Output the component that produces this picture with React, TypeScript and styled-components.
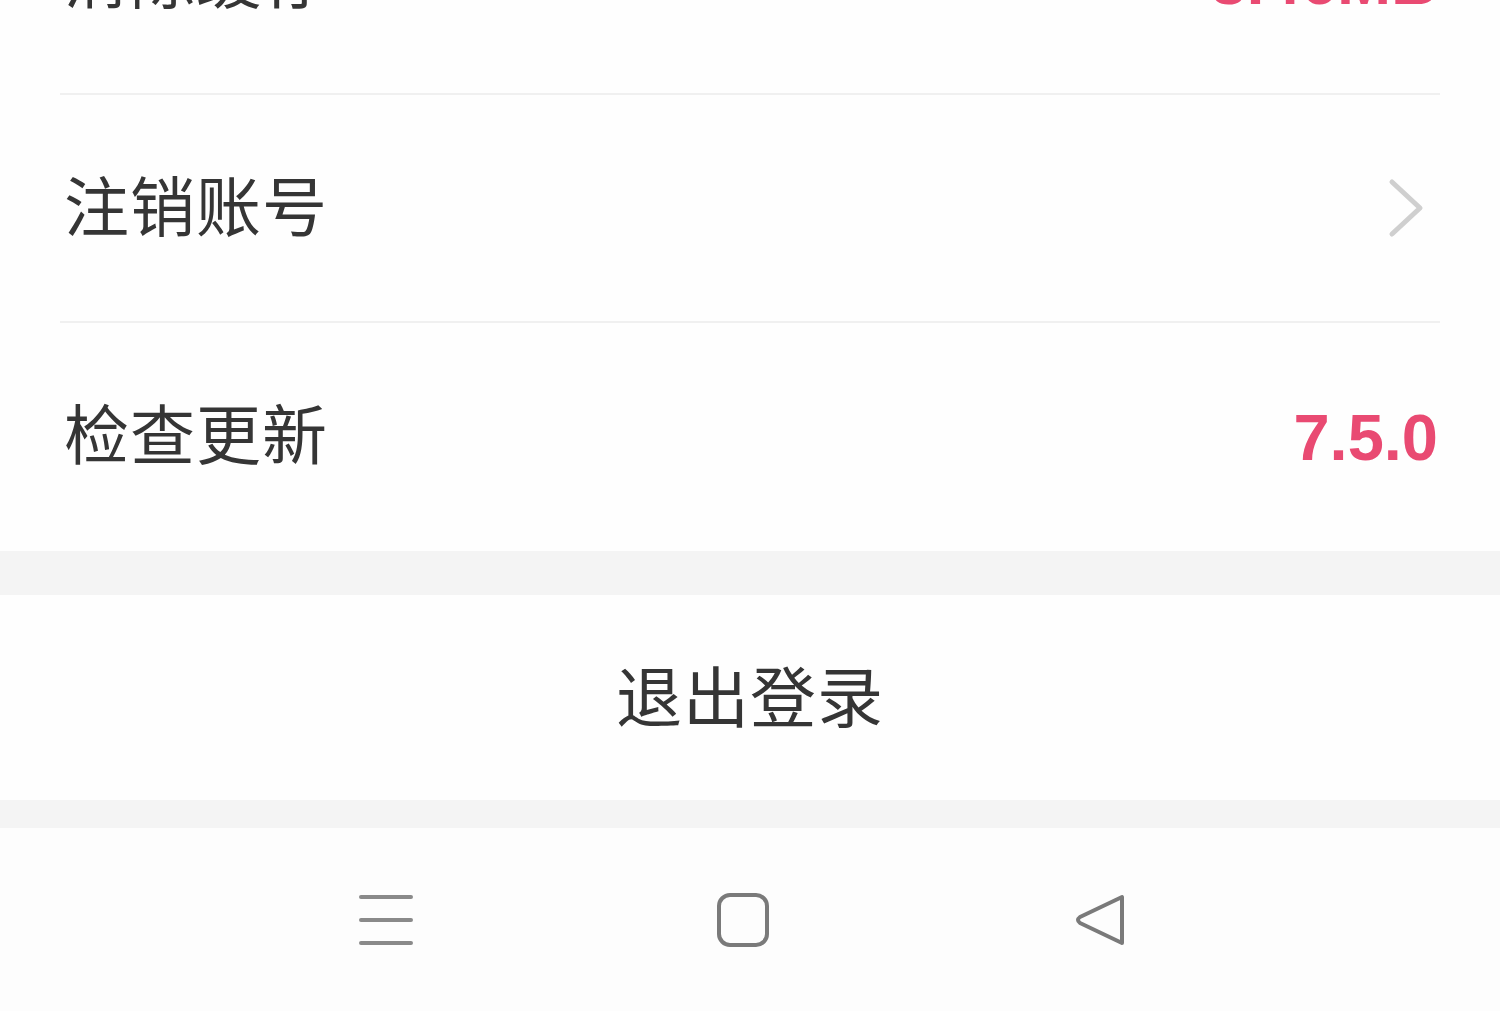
import React from 'react';
import styled, { createGlobalStyle } from 'styled-components';

const GlobalStyle = createGlobalStyle`
  html, body {
    margin: 0;
    padding: 0;
    background: #fdfdfd;
  }
  body {
    font-family: "Noto Sans CJK SC", "Noto Sans", sans-serif;
  }
`;

const Screen = styled.div`
  width: 1500px;
  height: 1011px;
  overflow: hidden;
  display: flex;
  flex-direction: column;
  background: #fdfdfd;
`;

const Group = styled.div`
  margin-top: -133px;
  background: #fefefe;
  display: flex;
  flex-direction: column;
`;

const Row = styled.div<{ $divider?: boolean }>`
  position: relative;
  height: 228px;
  display: flex;
  align-items: center;
  justify-content: space-between;
  padding: 0 62px 0 64px;
  box-sizing: border-box;

  &::after {
    content: '';
    display: ${(p) => (p.$divider ? 'block' : 'none')};
    position: absolute;
    left: 60px;
    right: 60px;
    bottom: 0;
    height: 2px;
    background: #f0f0f0;
  }
`;

const Label = styled.span`
  font-size: 65px;
  color: #353535;
  letter-spacing: 1px;
  margin-bottom: 12px;
`;

const Value = styled.span`
  font-family: "Liberation Sans", Arial, sans-serif;
  font-weight: 700;
  font-size: 65px;
  color: #e94a72;
`;

const Chevron = styled.svg`
  width: 44px;
  height: 64px;
  margin-right: 10px;
  margin-bottom: 2px;
`;

const Spacer = styled.div<{ $h: number }>`
  height: ${(p) => p.$h}px;
  background: #f4f4f4;
  flex-shrink: 0;
`;

const Logout = styled.button`
  height: 205px;
  border: none;
  background: #fefefe;
  font-family: inherit;
  font-size: 66px;
  color: #353535;
  letter-spacing: 1px;
  display: flex;
  align-items: center;
  justify-content: center;
  padding: 0 0 10px 0;
`;

const NavBar = styled.div`
  flex: 1;
  display: flex;
  align-items: center;
  justify-content: center;
  gap: 301px;
  padding-right: 14px;
  background: #fdfdfd;
`;

const NavIcon = styled.svg`
  width: 56px;
  height: 56px;
  stroke: #7a7a7a;
  fill: none;
  stroke-width: 4;
  stroke-linecap: round;
  stroke-linejoin: round;
`;

export default function App() {
  return (
    <>
      <GlobalStyle />
      <Screen>
        <Group>
          <Row $divider>
            <Label>清除缓存</Label>
            <Value>3.46MB</Value>
          </Row>
          <Row $divider>
            <Label>注销账号</Label>
            <Chevron viewBox="0 0 44 64">
              <path d="M8 6 L36 32 L8 58" fill="none" stroke="#cfcfcf" strokeWidth="5" strokeLinecap="round" strokeLinejoin="round" />
            </Chevron>
          </Row>
          <Row>
            <Label>检查更新</Label>
            <Value>7.5.0</Value>
          </Row>
        </Group>
        <Spacer $h={44} />
        <Logout>退出登录</Logout>
        <Spacer $h={28} />
        <NavBar>
          <NavIcon viewBox="0 0 56 56">
            <path d="M3 5 H53 M3 28 H53 M3 51 H53" stroke="#8a8a8a" />
          </NavIcon>
          <NavIcon viewBox="0 0 56 56">
            <rect x="4" y="3" width="48" height="50" rx="11" />
          </NavIcon>
          <NavIcon viewBox="0 0 56 56">
            <path d="M50 5 L50 51 L8 31 Q4 28 8 25 Z" />
          </NavIcon>
        </NavBar>
      </Screen>
    </>
  );
}
